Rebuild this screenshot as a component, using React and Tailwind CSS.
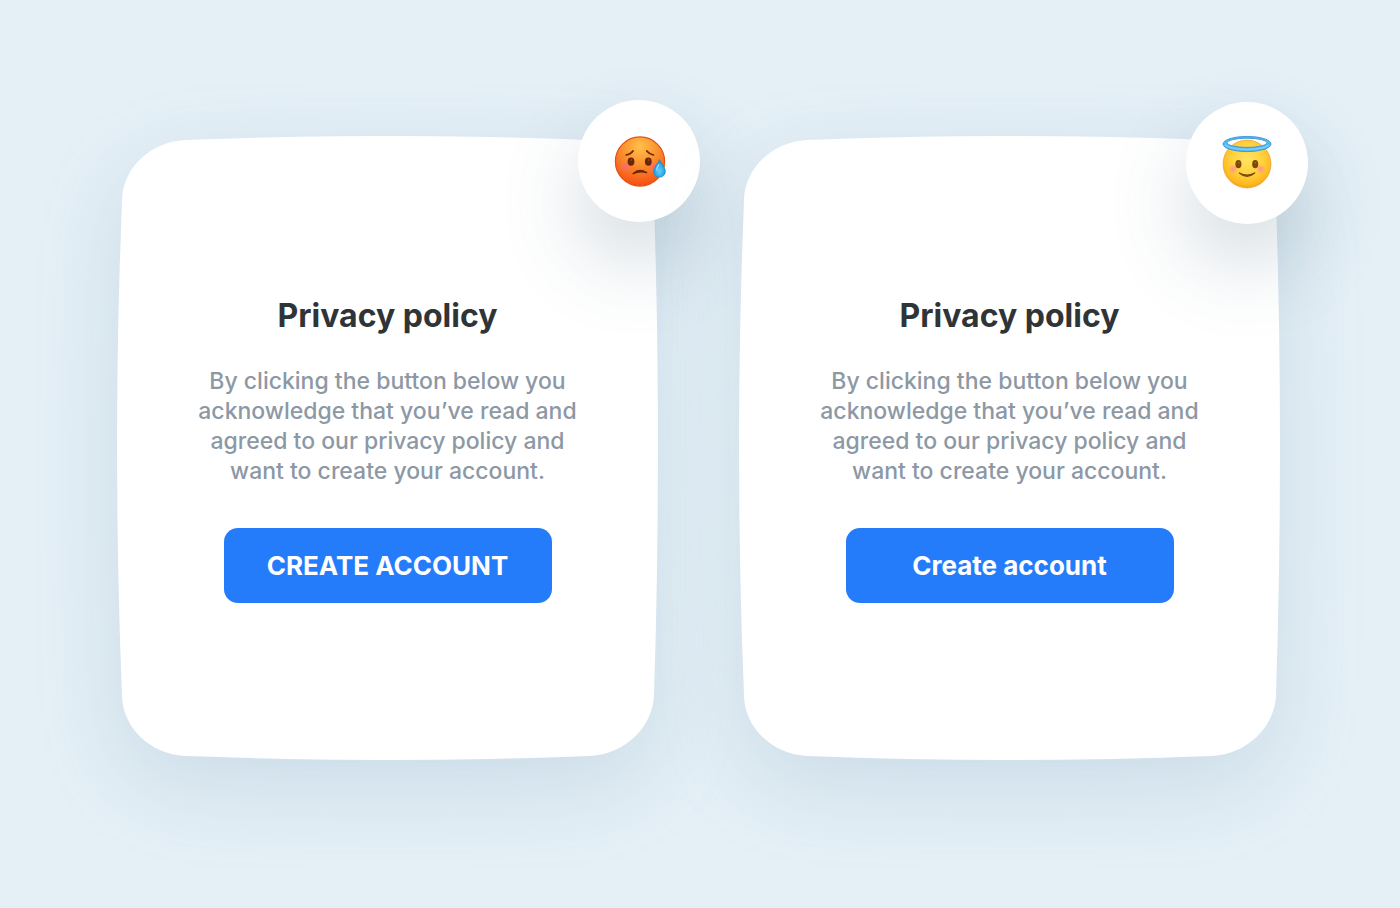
import React from 'react';

// Face with worried brows and a drop of sweat
function StressedFace() {
    return (
        <svg className="w-14 h-14" viewBox="0 0 56 56" role="img" aria-label="Stressed face">
            <defs>
                <radialGradient id="stressed-skin" cx="0.5" cy="0.2" r="0.85">
                    <stop offset="0" stopColor="#ffc04a" />
                    <stop offset="0.4" stopColor="#fb9430" />
                    <stop offset="0.8" stopColor="#f8601b" />
                    <stop offset="1" stopColor="#ee4412" />
                </radialGradient>
                <radialGradient id="stressed-blush">
                    <stop offset="0" stopColor="#fb6a78" stopOpacity="0.9" />
                    <stop offset="1" stopColor="#fb6a78" stopOpacity="0" />
                </radialGradient>
                <radialGradient id="stressed-drop" cx="0.5" cy="0.65" r="0.6">
                    <stop offset="0" stopColor="#5fd0fb" />
                    <stop offset="1" stopColor="#1592dc" />
                </radialGradient>
            </defs>
            <circle cx="29" cy="28.5" r="24.6" fill="url(#stressed-skin)" stroke="#df5316" strokeWidth="1.2" />
            <circle cx="14.5" cy="34" r="6" fill="url(#stressed-blush)" />
            <circle cx="43" cy="34" r="6" fill="url(#stressed-blush)" />
            <ellipse cx="20" cy="28.6" rx="3.4" ry="4.2" fill="#6b2608" />
            <ellipse cx="37.3" cy="28.6" rx="3.4" ry="4.2" fill="#6b2608" />
            <circle cx="20.4" cy="27" r="0.8" fill="#a3573a" />
            <circle cx="37.7" cy="27" r="0.8" fill="#a3573a" />
            <path d="M15.2 22 Q19.8 21.2 22 18" fill="none" stroke="#6b2608" strokeWidth="1.7" strokeLinecap="round" />
            <path d="M35.8 18 Q38 21 42.4 22" fill="none" stroke="#6b2608" strokeWidth="1.7" strokeLinecap="round" />
            <path d="M22.2 40.6 Q28 35.2 35.6 39.6 Q28.5 37.4 22.2 40.6 Z" fill="#6b2608" stroke="#6b2608" strokeWidth="1.5" strokeLinejoin="round" />
            <path
                d="M48.5 26.8 C50 30.6 54.3 34 54.3 38.4 A5.8 5.8 0 0 1 42.7 38.4 C42.7 34 47 30.6 48.5 26.8 Z"
                fill="url(#stressed-drop)"
                stroke="#1c86c4"
                strokeWidth="0.8"
            />
            <path d="M48 31.5 Q45.6 34.5 45.8 37" fill="none" stroke="#a9e6ff" strokeWidth="1.2" strokeLinecap="round" />
        </svg>
    );
}

// Smiling face with a halo
function AngelFace() {
    return (
        <svg className="w-14 h-14" viewBox="0 0 56 56" role="img" aria-label="Angel face">
            <defs>
                <radialGradient id="angel-skin" cx="0.5" cy="0.4" r="0.62">
                    <stop offset="0" stopColor="#ffe363" />
                    <stop offset="0.55" stopColor="#ffd03c" />
                    <stop offset="0.85" stopColor="#feb91f" />
                    <stop offset="1" stopColor="#f79a10" />
                </radialGradient>
                <radialGradient id="angel-blush">
                    <stop offset="0" stopColor="#ff9a86" />
                    <stop offset="0.5" stopColor="#ff9f80" stopOpacity="0.8" />
                    <stop offset="1" stopColor="#ff9a86" stopOpacity="0" />
                </radialGradient>
            </defs>
            <circle cx="28" cy="29" r="23.9" fill="url(#angel-skin)" stroke="#eda032" strokeWidth="0.8" />
            <circle cx="14" cy="34.2" r="4.6" fill="url(#angel-blush)" />
            <circle cx="41.6" cy="34.2" r="4.6" fill="url(#angel-blush)" />
            <ellipse cx="19.4" cy="29.2" rx="3" ry="4.1" fill="#7a4a08" />
            <ellipse cx="36.2" cy="29.2" rx="3" ry="4.1" fill="#7a4a08" />
            <circle cx="19.8" cy="27.8" r="0.8" fill="#a87a2c" />
            <circle cx="36.6" cy="27.8" r="0.8" fill="#a87a2c" />
            <path d="M20.4 38 Q28 44.6 35.6 38 Q28 42.2 20.4 38 Z" fill="#7a4a08" stroke="#7a4a08" strokeWidth="1.4" strokeLinejoin="round" />
            {/* Halo: thin at the back, thick at the front */}
            <path
                fillRule="evenodd"
                fill="#55b8f1"
                stroke="#3694d8"
                strokeWidth="0.9"
                d="M4 9 A24 7.6 0 0 1 52 9 A24 7.6 0 0 1 4 9 Z M8 7.8 A20 4.6 0 0 0 48 7.8 A20 4.6 0 0 0 8 7.8 Z"
            />
            <path d="M6.5 10.4 Q12 14.3 28 14.4 Q44 14.3 49.5 10.4" fill="none" stroke="#7ad0f9" strokeWidth="1.5" strokeLinecap="round" />
        </svg>
    );
}

// White shape with slightly bulging sides, stretched to fill the card
function CardShape() {
    return (
        <svg
            className="absolute inset-0 -z-10 w-full h-full overflow-visible drop-shadow-[0_28px_40px_rgba(125,165,190,0.24)]"
            viewBox="0 0 541 624"
            preserveAspectRatio="none"
            aria-hidden="true"
        >
            <path
                fill="#ffffff"
                d="M68 4 Q270 -4 473 4 C508 6 535 32 537 64 Q545 312 537 560 C535 592 508 618 473 620 Q270 628 68 620 C33 618 6 592 5 560 Q-5 312 5 64 C6 32 33 6 68 4 Z"
            />
        </svg>
    );
}

function PolicyCard({ buttonLabel, badgePosition, children }) {
    return (
        <section className="relative isolate flex flex-col items-center px-6 pt-40 pb-[157px] text-center">
            <CardShape />
            <div
                className={`absolute flex h-[122px] w-[122px] items-center justify-center rounded-full bg-white shadow-[0_40px_80px_rgba(60,95,120,0.22)] ${badgePosition}`}
            >
                {children}
            </div>
            <h2 className="text-[32px] leading-10 font-bold text-[#2f3437]">Privacy policy</h2>
            <p className="mt-[30px] max-w-[390px] text-[23px] leading-[30px] font-medium text-[#8d98a5]">
                By clicking the button below you acknowledge that you’ve read and agreed to our privacy policy and want to create your account.
            </p>
            <button
                type="button"
                className="mt-[42px] h-[75px] w-full max-w-[328px] cursor-pointer rounded-[14px] bg-[#257cfb] text-[26px] font-bold text-white hover:bg-[#1a6de6]"
            >
                {buttonLabel}
            </button>
        </section>
    );
}

function App() {
    return (
        <main className="min-h-screen overflow-hidden bg-[#e4eff6] px-6 py-[136px] font-['Inter',sans-serif] lg:pr-[120px] lg:pl-[117px]">
            <div className="grid gap-[81px] lg:grid-cols-2">
                <PolicyCard buttonLabel="CREATE ACCOUNT" badgePosition="-top-9 -right-[42px]">
                    <StressedFace />
                </PolicyCard>
                <PolicyCard buttonLabel="Create account" badgePosition="-top-[34px] -right-7">
                    <AngelFace />
                </PolicyCard>
            </div>
        </main>
    );
}

export default App;
